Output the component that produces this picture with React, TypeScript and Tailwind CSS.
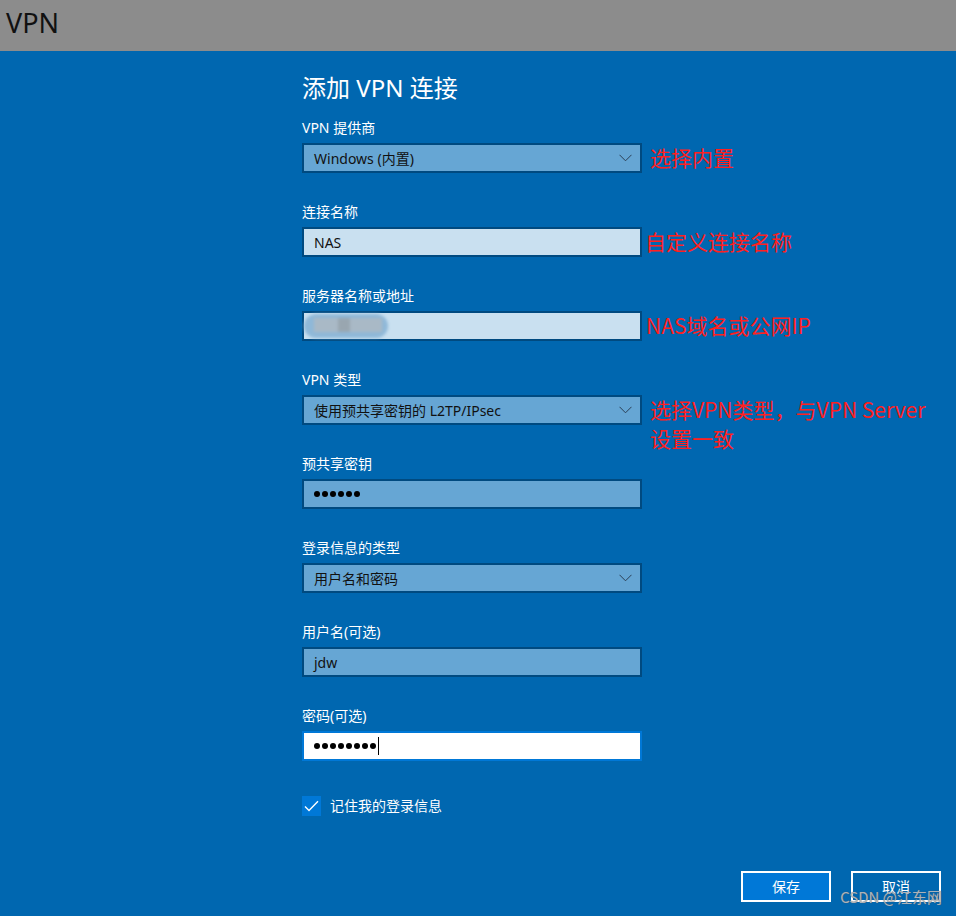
import React from "react";

const FONT = { fontFamily: '"Noto Sans", "Noto Sans CJK SC", sans-serif' };
const RED = { fontFamily: '"Noto Sans CJK SC", sans-serif' };

const Chevron = () => (
  <svg width="13" height="8" viewBox="0 0 13 8" className="shrink-0">
    <path d="M0.5 0.8 L6.5 6.8 L12.5 0.8" fill="none" stroke="#2b3f55" strokeWidth="1" />
  </svg>
);

const Note = ({ children, left = 10 }: { children: React.ReactNode; left?: number }) => (
  <div
    className="absolute top-[0px] text-[21px] leading-[29px] text-[#ff2020] w-[320px]"
    style={{ ...RED, left: 340 + left - 2 }}
  >
    {children}
  </div>
);

const Dots = ({ n }: { n: number }) => (
  <div className="flex items-center gap-[2px]">
    {Array.from({ length: n }).map((_, i) => (
      <div key={i} className="w-[6px] h-[6px] rounded-full bg-black" />
    ))}
  </div>
);

type FieldProps = {
  label: string;
  kind: "select" | "text" | "light" | "focus";
  children?: React.ReactNode;
  note?: React.ReactNode;
  noteLeft?: number;
};

const Field = ({ label, kind, children, note, noteLeft }: FieldProps) => {
  const box =
    kind === "focus"
      ? "bg-white border-[#0078d7]"
      : kind === "light"
      ? "bg-[#c9e0f0] border-[#004a80]"
      : "bg-[#66a6d4] border-[#004a80]";
  return (
    <div className="flex flex-col mb-[29px]">
      <div className="text-[14px] leading-[20px] text-white mb-[5px]">{label}</div>
      <div className="relative w-[340px]">
        <div className={`h-[30px] border-2 ${box} flex items-center justify-between pl-[10px] pr-[8px] text-[14px] text-[#111]`}>
          <div className="flex items-center">{children}</div>
          {kind === "select" && <Chevron />}
        </div>
        {note && <Note left={noteLeft}>{note}</Note>}
      </div>
    </div>
  );
};

export default function App() {
  return (
    <div className="w-[956px] h-[916px] flex flex-col overflow-hidden relative" style={FONT}>
      <div className="h-[51px] bg-[#8c8c8c] flex items-center pl-[6px] shrink-0">
        <span className="text-[27px] text-[#111] leading-none -mt-[6px]">VPN</span>
      </div>
      <div className="flex-1 bg-[#0067b0] flex flex-col">
        <div className="ml-[302px] pt-[21px] flex flex-col">
          <div className="text-[24px] leading-[32px] text-white mb-[14px]">添加 VPN 连接</div>
          <Field label="VPN 提供商" kind="select" note="选择内置">
            Windows (内置)
          </Field>
          <Field label="连接名称" kind="light" note="自定义连接名称" noteLeft={5}>
            NAS
          </Field>
          <Field label="服务器名称或地址" kind="light" note="NAS域名或公网IP" noteLeft={6}>
            <div className="-ml-[10px] relative w-[84px] h-[24px] blur-[1.5px]">
              <div className="absolute inset-0 rounded-full bg-[#8fb8d8]" />
              <div className="absolute left-[10px] top-[4px] w-[68px] h-[14px] bg-[#a9b9c6]" />
              <div className="absolute left-[34px] top-[4px] w-[12px] h-[14px] bg-[#99a6b0]" />
            </div>
          </Field>
          <Field
            label="VPN 类型"
            kind="select"
            note={
              <>
                选择VPN类型，与VPN Server
                <br />
                设置一致
              </>
            }
          >
            使用预共享密钥的 L2TP/IPsec
          </Field>
          <Field label="预共享密钥" kind="text">
            <Dots n={6} />
          </Field>
          <Field label="登录信息的类型" kind="select">
            用户名和密码
          </Field>
          <Field label="用户名(可选)" kind="text">
            jdw
          </Field>
          <Field label="密码(可选)" kind="focus">
            <Dots n={8} />
            <div className="w-[1px] h-[18px] bg-black ml-[2px]" />
          </Field>
          <div className="flex items-center gap-[9px] mt-[5px]">
            <div className="w-[19px] h-[20px] bg-[#0078d7] flex items-center justify-center">
              <svg width="15" height="12" viewBox="0 0 15 12">
                <path d="M1 6.5 L5 10.5 L14 1.2" fill="none" stroke="white" strokeWidth="1.4" />
              </svg>
            </div>
            <span className="text-[14px] text-white">记住我的登录信息</span>
          </div>
        </div>
        <div className="flex justify-end gap-[20px] pr-[15px] mt-[55px]">
          <button className="w-[90px] h-[31px] border-2 border-white bg-[#0078d7] text-white text-[14px]">保存</button>
          <button className="w-[90px] h-[31px] border-2 border-white text-white text-[14px]">取消</button>
        </div>
      </div>
      <div
        className="absolute right-[14px] bottom-[8px] text-[15px] text-[#c8ccd2]/80"
        style={{ textShadow: "0 0 1px #555", ...RED }}
      >
        CSDN @江东网
      </div>
    </div>
  );
}
